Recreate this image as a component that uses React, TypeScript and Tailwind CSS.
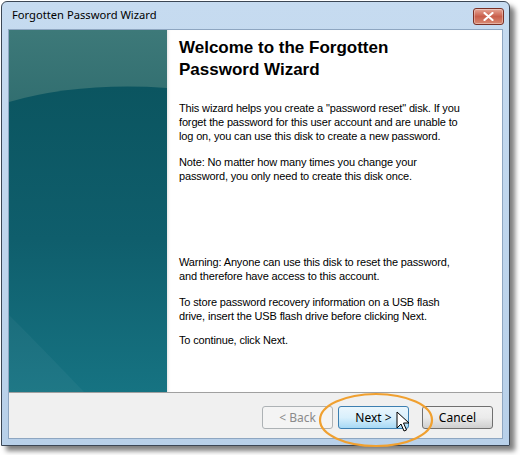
import React from 'react';

const Panel = () => (
  <svg width="158" height="362" viewBox="0 0 158 362" className="block">
    <defs>
      <linearGradient id="top" x1="0" y1="0" x2="0" y2="1">
        <stop offset="0" stopColor="#3d7979" />
        <stop offset="0.25" stopColor="#2f6c6e" />
        <stop offset="1" stopColor="#21636a" />
      </linearGradient>
      <linearGradient id="low" x1="0" y1="0" x2="0" y2="1">
        <stop offset="0" stopColor="#0b5560" />
        <stop offset="0.5" stopColor="#0f5e6c" />
        <stop offset="1" stopColor="#167382" />
      </linearGradient>
    </defs>
    <rect width="158" height="362" fill="url(#top)" />
    <path d="M0 72 Q 70 52 158 58 L158 362 L0 362 Z" fill="url(#low)" />
    <path d="M0 285 Q 35 320 75 362 L0 362 Z" fill="#ffffff" opacity="0.04" />
  </svg>
);

const Cursor = () => (
  <svg width="14" height="22" viewBox="0 0 14 22" className="block">
    <path
      d="M1 1 L1 17 L5 13 L8 20 L10.5 19 L7.5 12 L13 12 Z"
      fill="#ffffff"
      stroke="#000000"
      strokeWidth="1"
      strokeLinejoin="round"
    />
  </svg>
);

const btn =
  'h-[23px] w-[71px] rounded-[3px] border text-[12px] flex items-center justify-center';

export default function App() {
  return (
    <div className="relative h-[455px] w-[520px] overflow-hidden bg-white font-['Liberation_Sans',Arial,sans-serif]">
      <div className="ml-[1px] mt-[1px] flex h-[445px] w-[509px] flex-col rounded-t-[6px] border border-[#3b4654] bg-gradient-to-b from-[#c6dbf0] to-[#b8d0e9] shadow-[5px_5px_5px_rgba(0,0,0,0.5)]">
        <div className="flex h-[28px] items-center justify-between pl-[10px] pr-[5px]">
          <span className="font-['Noto_Sans',sans-serif] text-[11.2px] text-black">
            Forgotten Password Wizard
          </span>
          <div className="mt-[2px] flex h-[17px] w-[31px] items-center justify-center rounded-[3px] border border-[#7a3025] bg-gradient-to-b from-[#e6a697] via-[#c95f4c] to-[#d88a73] shadow-[inset_0_0_0_1px_rgba(255,255,255,0.35)]">
            <svg width="11" height="9" viewBox="0 0 11 9">
              <path
                d="M1.5 1 L9.5 8 M9.5 1 L1.5 8"
                stroke="#ffffff"
                strokeWidth="2.2"
                strokeLinecap="round"
              />
            </svg>
          </div>
        </div>
        <div className="mx-[6px] flex flex-1 flex-col border border-[#8ea6c1] bg-white">
          <div className="flex flex-1">
            <div className="w-[158px] shrink-0">
              <Panel />
            </div>
            <div className="flex-1 px-[12px] pt-[7px] text-[11px] leading-[14px] tracking-[-0.15px] text-black shadow-[inset_3px_0_3px_-2px_rgba(0,0,0,0.12)]">
              <h1 className="text-[17px] font-bold leading-[22px] tracking-normal">
                Welcome to the Forgotten
                <br />
                Password Wizard
              </h1>
              <p className="mt-[20px]">
                This wizard helps you create a "password reset" disk. If you
                <br />
                forget the password for this user account and are unable to
                <br />
                log on, you can use this disk to create a new password.
              </p>
              <p className="mt-[12px]">
                Note: No matter how many times you change your
                <br />
                password, you only need to create this disk once.
              </p>
              <p className="mt-[72px]">
                Warning: Anyone can use this disk to reset the password,
                <br />
                and therefore have access to this account.
              </p>
              <p className="mt-[12px]">
                To store password recovery information on a USB flash
                <br />
                drive, insert the USB flash drive before clicking Next.
              </p>
              <p className="mt-[10px]">To continue, click Next.</p>
            </div>
          </div>
          <div className="relative flex h-[46px] shrink-0 items-center justify-end border-t border-[#a0a0a0] bg-[#f0f0f0] pr-[9px] pt-[4px] font-['Noto_Sans',sans-serif]">
            <div className={`${btn} border-[#adb2b5] bg-[#f4f4f4] text-[#8a8a8a]`}>
              &lt; Back
            </div>
            <div
              className={`${btn} ml-[5px] border-[#3c7fb1] bg-gradient-to-b from-[#eaf6fd] via-[#d9f0fc] to-[#a7d9f5] text-black`}
            >
              Next &gt;
            </div>
            <div
              className={`${btn} ml-[13px] border-[#707070] bg-gradient-to-b from-[#f2f2f2] via-[#ebebeb] to-[#cfcfcf] text-black`}
            >
              Cancel
            </div>
            <svg
              width="118"
              height="58"
              viewBox="0 0 118 58"
              className="absolute left-[308px] top-[-2px]"
            >
              <ellipse
                cx="59"
                cy="29"
                rx="56"
                ry="26"
                fill="none"
                stroke="#f0a030"
                strokeWidth="2.2"
              />
            </svg>
            <div className="absolute left-[387px] top-[18px]">
              <Cursor />
            </div>
          </div>
        </div>
        <div className="h-[6px]" />
      </div>
    </div>
  );
}
